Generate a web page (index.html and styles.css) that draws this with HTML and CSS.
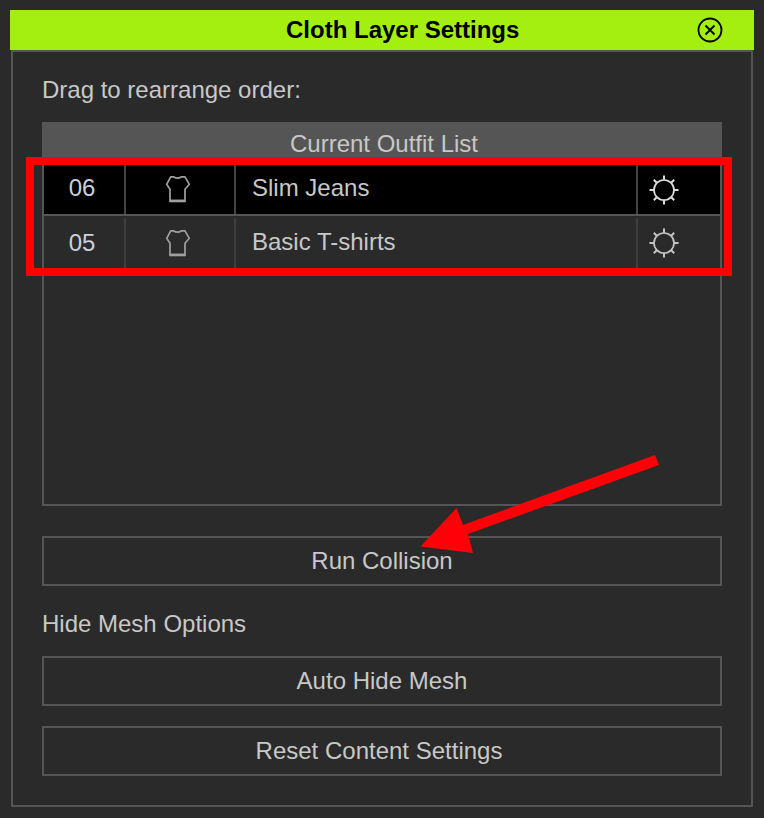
FILE: index.html
```html
<!DOCTYPE html>
<html lang="en">
<head>
    <meta charset="UTF-8">
    <meta name="viewport" content="width=device-width, initial-scale=1.0">
    <title>Cloth Layer Settings</title>
    <link rel="stylesheet" href="styles.css">
</head>
<body>
    <svg width="0" height="0" class="icon-defs">
        <symbol id="shirt" viewBox="0 0 26 28">
            <path d="M8.500 1.800 Q12.500 4.500 16.500 1.800 L20 1.800 L24.300 9.300 L20 14.300 L20 26.500 L5 26.500 L5 14.300 L1.700 9.300 L5.700 1.800 Z" fill="none" stroke="currentColor" stroke-width="1.700" stroke-linejoin="round"/>
            <path d="M5 25.800 H20" stroke="currentColor" stroke-width="2.500"/>
        </symbol>
        <symbol id="sun" viewBox="0 0 32 32">
            <circle cx="16" cy="16" r="10" fill="none" stroke="currentColor" stroke-width="1.700"/>
            <path d="M16 1.500 V6 M16 26 V30.500 M1.500 16 H6 M26 16 H30.500 M5.800 5.800 L9 9 M26.200 5.800 L23 9 M5.800 26.200 L9 23 M26.200 26.200 L23 23" stroke="currentColor" stroke-width="2"/>
        </symbol>
    </svg>

    <div class="window">
        <div class="title-bar">
            <h1>Cloth Layer Settings</h1>
            <svg class="close-icon" width="26" height="26" viewBox="0 0 26 26">
                <circle cx="13" cy="13" r="11.500" fill="none" stroke="#000" stroke-width="1.800"/>
                <path d="M8.500 8.500 L17.500 17.500 M17.500 8.500 L8.500 17.500" stroke="#000" stroke-width="1.800"/>
            </svg>
        </div>

        <div class="panel">
            <p class="label">Drag to rearrange order:</p>

            <div class="outfit-list">
                <div class="list-header">Current Outfit List</div>
                <div class="row selected">
                    <div class="cell num">06</div>
                    <div class="cell type"><svg class="shirt-icon"><use href="#shirt"/></svg></div>
                    <div class="cell name">Slim Jeans</div>
                    <div class="cell light"><svg class="sun-icon"><use href="#sun"/></svg></div>
                </div>
                <div class="row">
                    <div class="cell num">05</div>
                    <div class="cell type"><svg class="shirt-icon"><use href="#shirt"/></svg></div>
                    <div class="cell name">Basic T-shirts</div>
                    <div class="cell light"><svg class="sun-icon"><use href="#sun"/></svg></div>
                </div>
            </div>

            <button class="btn run-btn">Run Collision</button>

            <p class="label mesh-label">Hide Mesh Options</p>
            <button class="btn">Auto Hide Mesh</button>
            <button class="btn reset-btn"><span>Reset Content Settings</span></button>
        </div>
    </div>

    <!-- red annotations on top of the screenshot -->
    <div class="highlight-box"></div>
    <svg class="arrow" width="764" height="818" viewBox="0 0 764 818">
        <polygon points="655,455 659,465 468,534 473,553 420.500,546.500 456.500,508 463,525" fill="#ff0009"/>
    </svg>
</body>
</html>
```

FILE: styles.css
```css
body {
    font-family: "Liberation Sans", Arial, sans-serif;
    margin: 0;
    height: 818px;
    overflow: hidden;
    position: relative;
    background-color: #2a2a2a;
    color: #c8c8c8;
    font-size: 24px;
}

.icon-defs {
    position: absolute;
}

.window {
    padding: 10px 10px 0;
}

.title-bar {
    height: 40px;
    background-color: #a4ef0f;
    display: flex;
    align-items: center;
    padding-left: 276px;
}

.title-bar h1 {
    margin: 0;
    font-size: 24px;
    font-weight: bold;
    color: #000000;
}

.close-icon {
    margin-left: 178px;
}

.panel {
    margin: 0 1px;
    height: 757px;
    box-sizing: border-box;
    border: 2px solid #555555;
    padding: 0 29px;
    display: flex;
    flex-direction: column;
}

.label {
    margin: 0;
    line-height: 28px;
}

.panel > .label:first-child {
    margin-top: 24px;
    margin-bottom: 18px;
}

.outfit-list {
    height: 384px;
    box-sizing: border-box;
    border: 2px solid #555555;
    border-top: none;
}

.list-header {
    height: 43px;
    margin: 0 -2px;
    padding-left: 4px;
    background-color: #555555;
    text-align: center;
    line-height: 43px;
}

.row {
    height: 52px;
    display: flex;
}

.row.selected {
    height: 49px;
    background-color: #000000;
    border-bottom: 2px solid #555555;
}

.cell {
    display: flex;
    align-items: center;
    height: 50px;
    box-sizing: border-box;
    margin-top: 2px;
    border-right: 2px solid #3e3e3e;
}

.selected .cell {
    height: 100%;
    margin-top: 0;
    padding-bottom: 2px;
    border-right-color: #444444;
}

.num {
    width: 82px;
    justify-content: center;
    padding-right: 4px;
    color: #c8d0dc;
}

.selected .num {
    padding-bottom: 4px;
}

.type {
    width: 110px;
    justify-content: center;
    padding-right: 4px;
}

.name {
    width: 402px;
    padding-left: 16px;
    padding-bottom: 2px;
}

.selected .name {
    padding-bottom: 4px;
}

.light {
    flex: 1;
    border-right: none;
    padding-left: 10px;
}

.selected .light {
    padding-bottom: 0;
}

.shirt-icon {
    width: 26px;
    height: 28px;
    color: #a0a0a0;
}

.sun-icon {
    width: 32px;
    height: 32px;
    color: #c4c4c4;
}

.selected .sun-icon {
    color: #dddddd;
}

.btn {
    display: block;
    width: 100%;
    height: 50px;
    flex: none;
    padding: 0;
    font: inherit;
    color: inherit;
    background: transparent;
    border: 2px solid #555555;
    margin-bottom: 20px;
}

.run-btn {
    margin-top: 30px;
    margin-bottom: 24px;
}

.mesh-label {
    margin-bottom: 18px;
}

.reset-btn span {
    margin-left: -6px;
}

.highlight-box {
    position: absolute;
    left: 26px;
    top: 157px;
    width: 690px;
    height: 103px;
    border: 8px solid #ff0000;
}

.arrow {
    position: absolute;
    left: 0;
    top: 0;
}
```
